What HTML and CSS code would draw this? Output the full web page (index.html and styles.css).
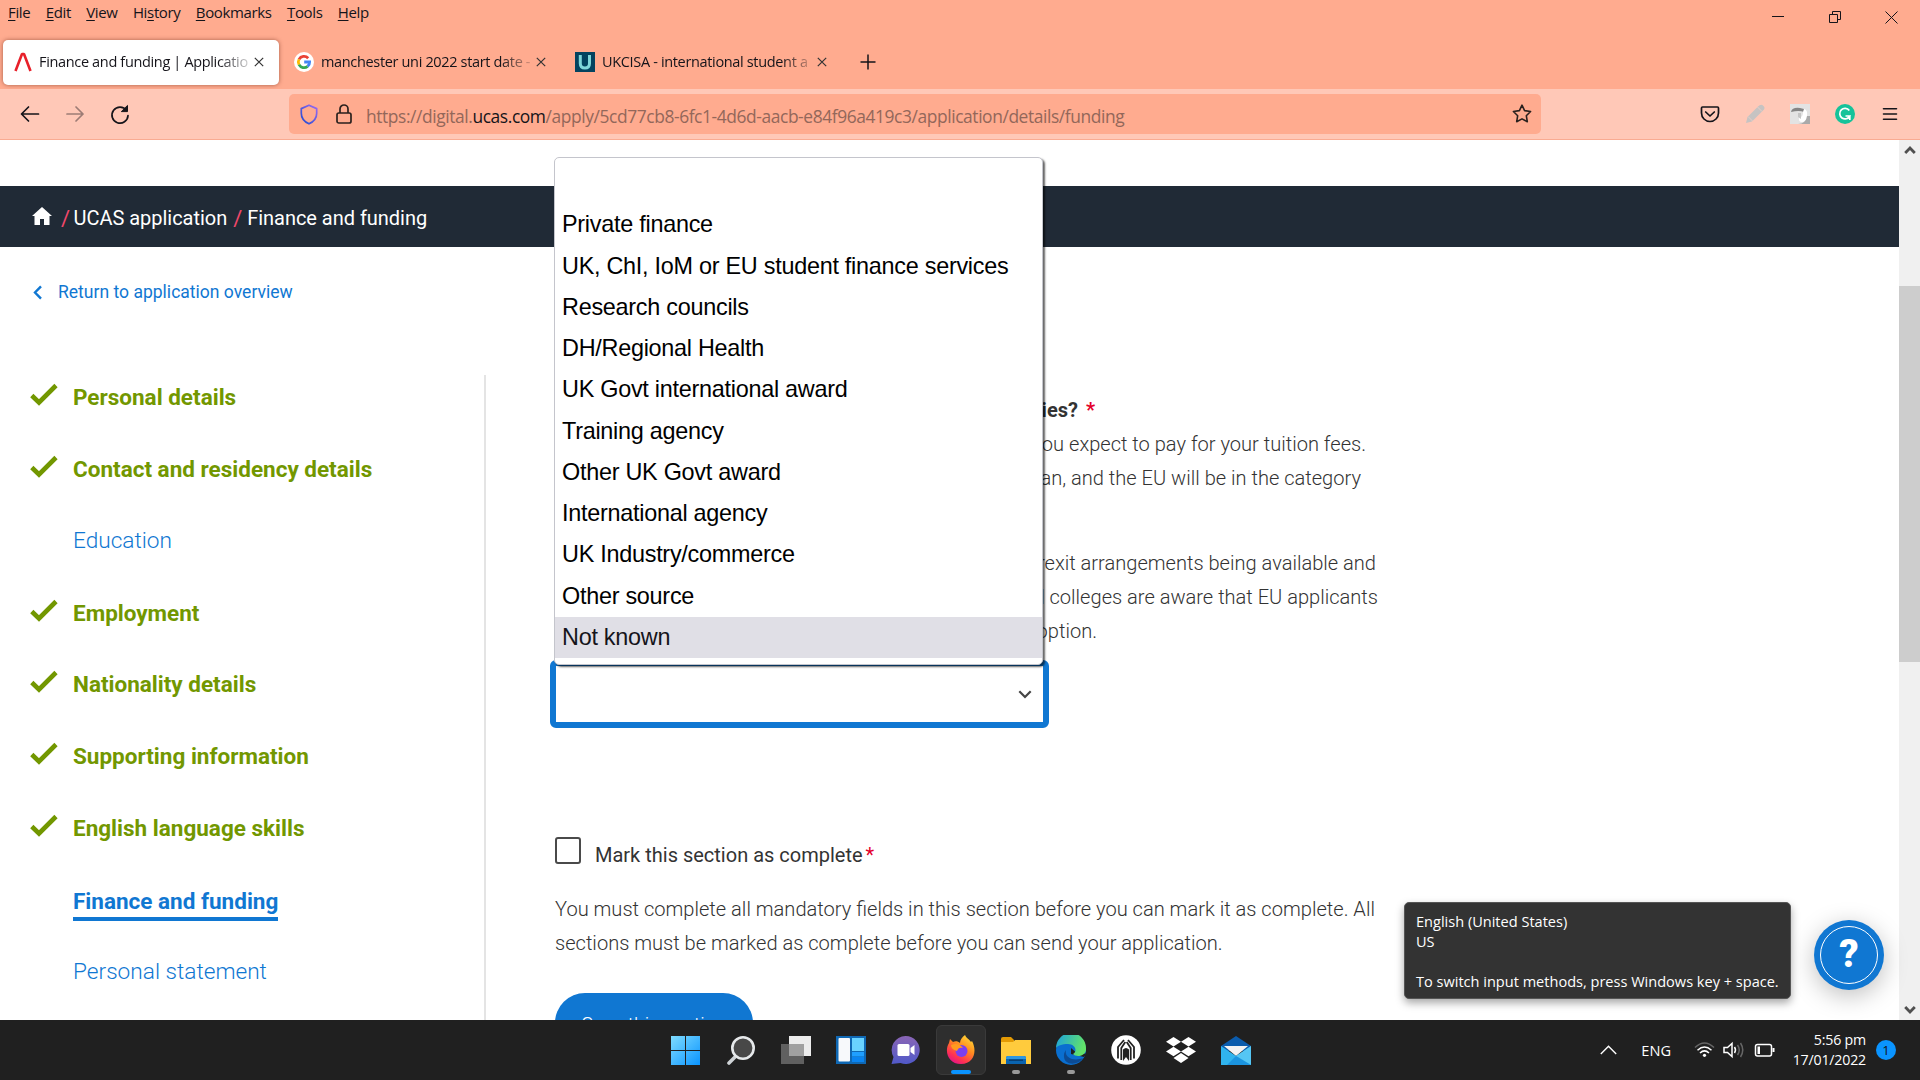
FILE: index.html
```html
<!DOCTYPE html>
<html lang="en">
<head>
<meta charset="utf-8">
<title>Finance and funding | Application</title>
<link rel="stylesheet" href="styles.css">
</head>
<body>
<header class="chrome">
  <div class="titlebar">
    <nav class="menu">
      <span><u>F</u>ile</span><span><u>E</u>dit</span><span><u>V</u>iew</span><span>Hi<u>s</u>tory</span><span><u>B</u>ookmarks</span><span><u>T</u>ools</span><span><u>H</u>elp</span>
    </nav>
    <svg class="winbtns" width="148" height="34" fill="none" stroke="#15141a" stroke-width="1">
      <path d="M20 16.5h12M77.500 14.500h8v8h-8zM80.500 14.500v-3h8v8h-3M133.500 11.500l12 12M145.500 11.500l-12 12"/>
    </svg>
  </div>
  <div class="tabs">
    <div class="tab active">
      <svg width="20" height="20" viewBox="0 0 20 20" fill="none" stroke="#e8202a" stroke-width="2.600"><path d="M2.500 19L9 2h2l6.500 17" stroke-linejoin="bevel"/></svg>
      <span class="tab-label">Finance and funding | Applicatio</span>
      <svg class="x" width="10" height="10"><path d="M.8.8l8.400 8.400M9.200.8L.8 9.200"/></svg>
    </div>
    <div class="tab">
      <svg width="20" height="20" viewBox="0 0 20 20"><circle cx="10" cy="10" r="10" fill="#fff"/><g fill="none" stroke-width="2.800"><path d="M14.200 6.200A5.700 5.700 0 0 0 5 7.300" stroke="#ea4335"/><path d="M5 7.300a5.700 5.700 0 0 0 0 5.400" stroke="#fbbc05"/><path d="M5 12.700a5.700 5.700 0 0 0 8.600 1.700" stroke="#34a853"/><path d="M13.600 14.400A5.500 5.500 0 0 0 15.600 10H10.200" stroke="#4285f4"/></g></svg>
      <span class="tab-label">manchester uni 2022 start date -</span>
      <svg class="x" width="10" height="10"><path d="M.8.8l8.400 8.400M9.200.8L.8 9.200"/></svg>
    </div>
    <div class="tab">
      <svg width="20" height="20" viewBox="0 0 20 20"><path fill="#03435f" d="M0 0h20v20H0z"/><path d="M5.300 3v8.500q0 4.500 4.600 4.500t4.600-4.500V3" fill="none" stroke="#7fd6d9" stroke-width="3"/></svg>
      <span class="tab-label">UKCISA - international student a</span>
      <svg class="x" width="10" height="10"><path d="M.8.8l8.400 8.400M9.200.8L.8 9.200"/></svg>
    </div>
    <svg class="newtab" width="16" height="16"><path d="M8 .5v15M.5 8h15" stroke="#15141a" stroke-width="1.500"/></svg>
  </div>
  <div class="toolbar">
    <svg class="nav" width="130" height="24" fill="none" stroke="#15141a" stroke-width="1.700" stroke-linecap="round" stroke-linejoin="round">
      <path d="M18.500 12H2M8.500 5L1.500 12l7 7"/>
      <path d="M47 12h16M56 5l7 7-7 7" opacity=".42"/>
      <path d="M106.500 8.500A8 8 0 1 0 108 13.500"/><path d="M107.500 3.800v5.800h-5.800z" fill="#15141a" stroke-width="1"/>
    </svg>
    <div class="urlbar">
      <svg width="18" height="21" viewBox="0 0 18 21" fill="none" stroke="url(#sg)" stroke-width="1.700" stroke-linejoin="round"><defs><linearGradient id="sg" x1="0" y1="1" x2="1" y2="0"><stop offset=".2" stop-color="#3551d6"/><stop offset="1" stop-color="#9d6bf0"/></linearGradient></defs><path d="M9 1.200l7.700 3.400v4.600c0 4.500-3 8.500-7.700 10.600C4.300 17.700 1.300 13.700 1.300 9.200V4.600z"/></svg>
      <svg class="lock" width="16" height="20" viewBox="0 0 16 20" fill="none" stroke="#2b211e" stroke-width="1.700"><rect x="1" y="9" width="14" height="10" rx="1.800"/><path d="M4 9V5a4 4 0 0 1 8 0v4"/></svg>
      <span class="url">https://digital.<b>ucas.com</b>/apply/5cd77cb8-6fc1-4d6d-aacb-e84f96a419c3/application/details/funding</span>
      <svg class="star" width="20" height="20" viewBox="0 0 20 20" fill="none" stroke="#2b211e" stroke-width="1.600" stroke-linejoin="round"><path d="M10 1.200l2.600 5.400 6 .9-4.300 4.200 1 6-5.300-2.800-5.300 2.800 1-6L1.400 7.500l6-.9z"/></svg>
    </div>
    <div class="exts">
      <svg width="20" height="20" viewBox="0 0 20 20" fill="none" stroke="#15141a" stroke-width="1.700" stroke-linecap="round" stroke-linejoin="round"><path d="M2.500 3h15q1 0 1 1v5a8.500 8.500 0 0 1-17 0V4q0-1 1-1zM5.700 8L10 12l4.300-4"/></svg>
      <svg width="20" height="20" viewBox="0 0 20 20"><path d="M1 19l1.500-6L13 2.500q3-3 5.500-.5t-1 5L7 17.500z" fill="#c6c3c2"/><path d="M3 12.500l4.500 4.500M12.500 3l4.500 4.500" stroke="#e6cfc8" stroke-width="1"/></svg>
      <svg width="20" height="20" viewBox="0 0 20 20"><path fill="#e3e3e3" d="M0 0h20v20H0z"/><path fill="#aaa" d="M20 12v8H8q8 0 8-8z"/><path fill="#858585" d="M1 8q1-5 9-4l4 1v3q-5-2-13 0z"/><path fill="#fff" d="M14 5q4 1 3 7t-5 6q-4 0-3-5 4 1 4-5z"/><path fill="#c5c5c5" d="M8 9h3v6L8 13z"/></svg>
      <svg width="20" height="20" viewBox="0 0 20 20"><circle cx="10" cy="10" r="10" fill="#15c39a"/><path d="M14.300 6.500A5.300 5.300 0 1 0 14.800 12H10.500M14.800 16v-4.700" fill="none" stroke="#fff" stroke-width="1.700"/></svg>
      <svg width="20" height="20" viewBox="0 0 20 20" stroke="#15141a" stroke-width="1.600" stroke-linecap="round"><path d="M3.500 4.700h13M3.500 10h13M3.500 15.300h13"/></svg>
    </div>
  </div>
</header>

<div class="viewport">
  <div class="page">
    <div class="crumbs">
      <svg width="20" height="18" viewBox="0 0 20 18"><path fill="#fff" d="M10 0l10 9h-2.500v9H12v-6H8v6H2.500V9H0z"/></svg>
      <i>/</i><span>UCAS application</span><i>/</i><span>Finance and funding</span>
    </div>
    <div class="return">
      <svg width="9" height="15" viewBox="0 0 9 15"><path d="M8 1.300L2 7.500l6 6.200" fill="none" stroke="#1077d2" stroke-width="2.400"/></svg>
      <span>Return to application overview</span>
    </div>
    <div class="columns">
      <ul class="side">
        <li class="done"><svg class="tick" viewBox="0 0 28 23"><path d="M1.800 12.500l7.200 7L26 2.500"/></svg>Personal details</li>
        <li class="done"><svg class="tick" viewBox="0 0 28 23"><path d="M1.800 12.500l7.200 7L26 2.500"/></svg>Contact and residency details</li>
        <li>Education</li>
        <li class="done"><svg class="tick" viewBox="0 0 28 23"><path d="M1.800 12.500l7.200 7L26 2.500"/></svg>Employment</li>
        <li class="done"><svg class="tick" viewBox="0 0 28 23"><path d="M1.800 12.500l7.200 7L26 2.500"/></svg>Nationality details</li>
        <li class="done"><svg class="tick" viewBox="0 0 28 23"><path d="M1.800 12.500l7.200 7L26 2.500"/></svg>Supporting information</li>
        <li class="done"><svg class="tick" viewBox="0 0 28 23"><path d="M1.800 12.500l7.200 7L26 2.500"/></svg>English language skills</li>
        <li class="current"><span>Finance and funding</span></li>
        <li>Personal statement</li>
      </ul>
      <main class="form">
        <p class="question">studies? <em>*</em></p>
        <p class="hint hint-1">you expect to pay for your tuition fees.</p>
        <p class="hint hint-2">Man, and the EU will be in the category</p>
        <p class="hint hint-3">Brexit arrangements being available and</p>
        <p class="hint hint-4">and colleges are aware that EU applicants</p>
        <p class="hint hint-5">option.</p>
        <div class="select">
          <svg width="14" height="9" viewBox="0 0 14 9"><path d="M1.300 1.300L7 7l5.700-5.700" fill="none" stroke="#444" stroke-width="2.200"/></svg>
          <ul class="options">
            <li></li>
            <li>Private finance</li>
            <li>UK, ChI, IoM or EU student finance services</li>
            <li>Research councils</li>
            <li>DH/Regional Health</li>
            <li>UK Govt international award</li>
            <li>Training agency</li>
            <li>Other UK Govt award</li>
            <li>International agency</li>
            <li>UK Industry/commerce</li>
            <li>Other source</li>
            <li class="hover">Not known</li>
          </ul>
        </div>
        <div class="mark"><span class="box"></span><span>Mark this section as complete<em>*</em></span></div>
        <p class="note">You must complete all mandatory fields in this section before you can mark it as complete. All<br>sections must be marked as complete before you can send your application.</p>
        <div class="save">Save this section</div>
      </main>
    </div>
  </div>
  <div class="scroll">
    <svg width="12" height="10" viewBox="0 0 12 10"><path d="M1.200 8L6 3l4.800 5" fill="none" stroke="#505050" stroke-width="2.800"/></svg>
    <div class="thumb"></div>
    <svg width="12" height="10" viewBox="0 0 12 10"><path d="M1.200 2L6 7l4.800-5" fill="none" stroke="#505050" stroke-width="2.800"/></svg>
  </div>
  <div class="help"><div>?</div></div>
  <div class="tooltip">English (United States)<br>US<br><br>To switch input methods, press Windows key + space.</div>
</div>

<footer class="taskbar">
  <div class="apps">
    <div class="app"><svg viewBox="0 0 30 30"><defs><linearGradient id="w" x1="0" y1="0" x2="1" y2="1"><stop offset="0" stop-color="#7fdcff"/><stop offset="1" stop-color="#0a94ff"/></linearGradient></defs><path fill="url(#w)" d="M0 1h14v14H0zM15 1h14v14H15zM0 16h14v14H0zM15 16h14v14H15z"/></svg></div>
    <div class="app"><svg viewBox="0 0 30 30"><path d="M10 21L3 28" stroke="#cfd3d6" stroke-width="3.600" stroke-linecap="round"/><circle cx="17" cy="13" r="10.700" fill="#484848" stroke="#e6e9eb" stroke-width="2.600"/></svg></div>
    <div class="app"><svg viewBox="0 0 30 30"><path fill="#ececec" d="M8 1h22v20H8z"/><path fill="#606060" d="M0 9h23v20H0z"/><path fill="#a0a0a0" d="M8 9h15v12H8z"/></svg></div>
    <div class="app"><svg viewBox="0 0 30 30"><path fill="#0f68b4" d="M0 1h30v28H0z"/><rect x="2.500" y="3" width="11.500" height="23.500" rx="1" fill="#f7f9fb"/><path fill="#69d3ff" d="M16 3h12v13H16z"/><path fill="#1f9fff" d="M16 17h12v4.500H16z"/><path fill="#0a84f0" d="M16 22h12v5H16z"/></svg></div>
    <div class="app"><svg viewBox="0 0 30 30"><defs><linearGradient id="c" x1="0" y1="0" x2="0" y2="1"><stop offset="0" stop-color="#8a65b5"/><stop offset="1" stop-color="#5059c9"/></linearGradient></defs><path fill="url(#c)" d="M14.500 1a14 14 0 1 1-5 27L.5 29l2-7A14 14 0 0 1 14.500 1z"/><rect x="6.500" y="9" width="12" height="12" rx="1.500" fill="#fff"/><path fill="#fff" d="M19.500 13l4-3v10l-4-3z"/></svg></div>
    <div class="app on"><svg viewBox="0 0 30 30"><defs><linearGradient id="f" x1=".9" y1="0" x2=".3" y2="1"><stop offset="0" stop-color="#ffe53a"/><stop offset=".45" stop-color="#ff8a1f"/><stop offset=".8" stop-color="#ff3152"/><stop offset="1" stop-color="#e31587"/></linearGradient></defs><path fill="url(#f)" d="M19 0c1 3 4 4 6 7l1-1c5 9 3 23-11 23C2 29-2 16 3 8l1-4 3 3c2-1 5-1 7 1 0-3 2-6 5-8z"/><circle cx="15.500" cy="16" r="6" fill="#7a3ff0"/><path fill="#ff9a1f" d="M5 10c5-2 9-1 12 3-3-1-5 0-6 3-4-1-6-3-6-6z"/></svg><s></s></div>
    <div class="app"><svg viewBox="0 0 30 30"><path fill="#e39a04" d="M0 4q0-2 2-2h8l3 3v5H0z"/><path fill="#ffcb3d" d="M0 7h12l2-2h16v24H0z"/><path fill="#0a64b0" d="M5 29v-6q0-2 2-2h16q2 0 2 2v6z"/><path fill="#2f97e0" d="M5 23q0-2 2-2h16q2 0 2 2v1H5z"/><path fill="#073f74" d="M8 24.500h14v1.500H8z"/></svg><s></s></div>
    <div class="app"><svg viewBox="0 0 30 30"><defs><linearGradient id="e" x1="0" y1="0" x2="1" y2=".3"><stop offset="0" stop-color="#1aa0e0"/><stop offset="1" stop-color="#62e36a"/></linearGradient></defs><circle cx="15" cy="15" r="15" fill="#0a6fd0"/><path fill="#202020" d="M31 18l-3 4-13-3v-6l8 7z"/><path fill="url(#e)" d="M0 13A15 15 0 0 1 30 13c1 8-10 10-13 6 5-3 2-10-5-10-6 0-11 2-12 4z"/><path fill="#0c4b94" d="M10 15c-2 7 7 12 17 8-5 8-20 8-19-3 0-2 1-4 2-5z"/></svg><s></s></div>
    <div class="app"><svg viewBox="0 0 30 30"><circle cx="15" cy="15" r="14.800" fill="#fff"/><path fill="none" stroke="#222" stroke-width="1.800" d="M7 23.500V12l6-7M23 23.500V12l-6-7M10.300 25V13l4-6M19.700 25V13l-4-6"/><path fill="#222" d="M12 14.500q3-3 6 0V26l-3-4-3 4z"/></svg></div>
    <div class="app"><svg viewBox="0 0 30 30"><path fill="#fff" d="M7.500 2L15 6.700 7.500 11.500 0 6.700zM22.500 2L30 6.700l-7.500 4.800L15 6.700zM7.500 11.700L15 16.500l-7.500 4.700L0 16.500zM22.500 11.700L30 16.500l-7.500 4.700L15 16.500zM7.500 23L15 18l7.500 5L15 28z"/></svg></div>
    <div class="app"><svg viewBox="0 0 30 30"><path fill="#0b5cad" d="M0 11L15 1l15 10v5H0z"/><path fill="#f3f3f3" d="M3 11h24L15 21z"/><path fill="#30b4ee" d="M0 11l15 10 15-10v19H0z"/><path fill="#65cdf6" d="M15 21l15 9V11z" opacity=".7"/><path fill="#1386d8" d="M15 21l15 9H6z" opacity=".7"/></svg></div>
  </div>
  <div class="tray">
    <svg width="17" height="10"><path d="M.8 9L8.500 1.200 16.200 9" fill="none" stroke="#fff" stroke-width="1.400"/></svg>
    <span class="lang">ENG</span>
    <svg class="status" width="82" height="20" viewBox="0 0 82 20" fill="none" stroke="#fff" stroke-width="1.500">
      <path d="M1 7.500q9.500-9 19 0" stroke="#666"/><path d="M3.500 10.300q7-6.500 14 0M6 13q4.500-4.300 9 0"/><circle cx="10.500" cy="15.300" r="1.600" fill="#fff" stroke="none"/>
      <path d="M30 7.500h3.500L38 3.500v13l-4.500-4H30zM40.500 7q2 3 0 6"/><path d="M43.500 5q3.500 5 0 10M46.500 3q4.500 7 0 14" stroke="#666"/>
      <rect x="61.500" y="4.500" width="16" height="11.500" rx="2"/><path d="M79.500 8v4" stroke-width="2"/><path fill="#fff" stroke="none" d="M63.500 6.500h2.500v7.500h-2.500z"/>
    </svg>
    <div class="clock">5:56 pm<br>17/01/2022</div>
    <span class="badge">1</span>
  </div>
</footer>
</body>
</html>
```
FILE: styles.css
```css
* { box-sizing: border-box; margin: 0; padding: 0; }
body { width: 1920px; height: 1080px; overflow: hidden; display: flex; flex-direction: column; background: #fff; font-family: Roboto, sans-serif; color: #333; }
svg { display: block; flex: none; }
ul { list-style: none; }
em { font-style: normal; color: #e4002b; }

.chrome { height: 140px; background: #ffab8f; font: 14.5px/20px "Open Sans", sans-serif; color: #15141a; letter-spacing: -.34px; display: flex; flex-direction: column; flex: none; }
.titlebar { height: 36px; display: flex; justify-content: space-between; }
.menu { display: flex; gap: 15.3px; padding: 2px 0 0 8px; font-size: 15px; letter-spacing: -.35px; }
.menu u { text-underline-offset: 2px; }
.winbtns { margin-right: 20px; }
.tabs { height: 53px; display: flex; align-items: center; padding: 0 3px 1px; }
.tab { width: 276px; height: 45px; margin-right: 5px; padding: 0 14px 0 10px; display: flex; align-items: center; border-radius: 5px; }
.tab.active { background: #fff; box-shadow: 0 0 4px rgba(80, 20, 0, .5); }
.tab-label { width: 211px; margin-left: 6px; white-space: nowrap; mask-image: linear-gradient(to right, #000 85%, rgba(0, 0, 0, .15) 100%); }
.tab:nth-child(2) .tab-label, .tab:nth-child(3) .tab-label { margin-left: 7px; }
.x { margin-left: 4px; stroke: #333; stroke-width: 1.2; }
.newtab { margin-left: 14px; }
.toolbar { height: 51px; background: #ffc8b7; border-bottom: 1px solid #f9ab92; display: flex; align-items: center; }
.nav { margin-left: 20px; }
.urlbar { margin-left: 139px; width: 1252px; height: 40px; border-radius: 5px; background: #ffab8f; padding: 0 9px 0 11px; display: flex; align-items: center; }
.lock { margin: 0 14px 0 18px; }
.url { font-size: 17.4px; line-height: 24px; letter-spacing: -.41px; color: #93675a; padding-top: 4px; white-space: nowrap; }
.url b { font-weight: 400; color: #15141a; }
.star { margin-left: auto; }
.exts { margin-left: 159px; display: flex; gap: 25px; }

.viewport { height: 880px; display: flex; position: relative; overflow: hidden; flex: none; }
.page { width: 1899px; padding-top: 46px; }
.crumbs { height: 61px; background: #202a36; color: #fff; font-size: 20px; display: flex; align-items: center; padding: 3px 0 0 32px; }
.crumbs svg { margin: -4px 9px 0 0; }
.crumbs i { font-style: normal; font-size: 22px; color: #f0476b; width: 12.5px; }
.crumbs i + span + i { margin-left: 6px; width: 14px; }
.crumbs span { letter-spacing: -.03px; }
.return { height: 90px; display: flex; align-items: center; padding-left: 33px; gap: 16px; color: #1077d2; font-size: 17.55px; }
.columns { display: flex; height: 700px; }
.side { width: 486px; margin-top: 38px; border-right: 2px solid #e4e4e4; margin-bottom: -60px; }
.side li { height: 71.8px; display: flex; align-items: center; padding-left: 73px; font-size: 22.65px; font-weight: 300; color: #1077d2; }
.side li:first-child { margin-top: -13.6px; }
.side .done, .side .current { font-size: 22.5px; font-weight: 700; }
.side .done { color: #729700; padding-left: 30px; }
.side .current span { border-bottom: 4px solid #1077d2; padding-top: 6px; line-height: 32px; }
.tick { width: 28px; height: 23px; margin: -5px 15px 0 0; fill: none; stroke: #729700; stroke-width: 4.6; }

.form { margin-left: 64px; width: 840px; padding-top: 56px; font-size: 20px; }
.form p { line-height: 34px; font-weight: 300; padding-left: 5px; }
.form p.question { font-weight: 700; text-align: right; margin-right: 295px; word-spacing: 3px; }
.form .hint { text-align: right; font-size: 20.07px; }
.hint-1 { margin-right: 24px; }
.hint-2 { margin-right: 29px; }
.form .hint-3 { margin: 51px 14px 0 0; }
.hint-4 { margin-right: 12px; }
.hint-5 { margin-right: 293px; }
.select { position: relative; width: 499px; height: 68px; margin-top: 12px; border: 6px solid #1077d2; border-radius: 6px; display: flex; align-items: center; justify-content: flex-end; padding-right: 11px; background: #fff; }
.options { position: absolute; left: -2px; bottom: 57px; width: 489px; height: 508px; padding: 5px 0; background: #fff; border: 1px solid #c4c5cc; border-radius: 5px; box-shadow: 2px 2px 2px rgba(0, 0, 0, .6); font: 23.4px/40.4px "Liberation Sans", Arial, sans-serif; letter-spacing: -.26px; color: #000; }
.options li { height: 41.25px; padding-left: 7px; white-space: nowrap; }
.options .hover { background: #e0dfe6; color: #15141a; }
.mark { margin: 109px 0 0 5px; display: flex; gap: 14px; line-height: 34px; }
.mark em { margin-left: 3px; }
.mark > span:last-child { padding-top: 1px; }
.box { width: 26px; height: 27px; border: 2px solid #4a4a4a; border-radius: 3px; }
.form .note { font-size: 20.08px; margin-top: 20px; white-space: nowrap; }
.save { margin: 33px 0 0 5px; width: 198px; height: 60px; border-radius: 30px; background: #1077d2; color: #fff; font-size: 19.6px; font-weight: 300; line-height: 65px; text-align: center; white-space: nowrap; }

.scroll { width: 21px; background: #f0f0f0; display: flex; flex-direction: column; align-items: center; padding: 5px 0; justify-content: space-between; }
.thumb { width: 21px; height: 376px; background: #cdcdcd; margin: 131px 0 auto; }
.help { position: absolute; left: 1814px; top: 780px; width: 70px; height: 70px; border-radius: 50%; background: #1077d2; padding: 6px; box-shadow: 0 6px 24px rgba(0, 0, 0, .25); }
.help div { height: 58px; border: 1.5px solid #fff; border-radius: 50%; color: #fff; font: 900 38px/54px Roboto, sans-serif; text-align: center; }
.tooltip { position: absolute; left: 1404px; top: 762px; width: 387px; height: 97px; padding: 8px 11px; background: #333; border: 1px solid #555; border-radius: 5px; color: #fff; font: 14.56px/20px "Open Sans", sans-serif; white-space: nowrap; box-shadow: 0 4px 8px rgba(0, 0, 0, .35); }

.taskbar { height: 60px; background: #202020; color: #fff; display: flex; justify-content: space-between; font: 14.2px/20px "Open Sans", sans-serif; flex: none; }
.apps { display: flex; gap: 5px; margin-left: 661px; padding-top: 5px; }
.app { width: 50px; height: 50px; border-radius: 6px; padding: 10px; position: relative; }
.app svg { width: 30px; height: 30px; }
.app.on { background: #2e2e2e; border: 1px solid #3a3a3a; padding: 9px; }
.app s { position: absolute; left: 21px; bottom: 1px; width: 8px; height: 4px; border-radius: 2px; background: #999; }
.app.on s { left: 14px; bottom: 0; width: 20px; background: #0a94ff; }
.tray { display: flex; align-items: center; padding-right: 24px; }
.lang { margin: 0 23px 0 24px; font-size: 14.6px; }
.clock { width: 90px; text-align: right; letter-spacing: -.2px; margin-top: -1px; }
.badge { width: 20px; height: 20px; margin-left: 10px; border-radius: 50%; background: #0a94ff; color: #111; text-align: center; font-size: 13px; }
```
